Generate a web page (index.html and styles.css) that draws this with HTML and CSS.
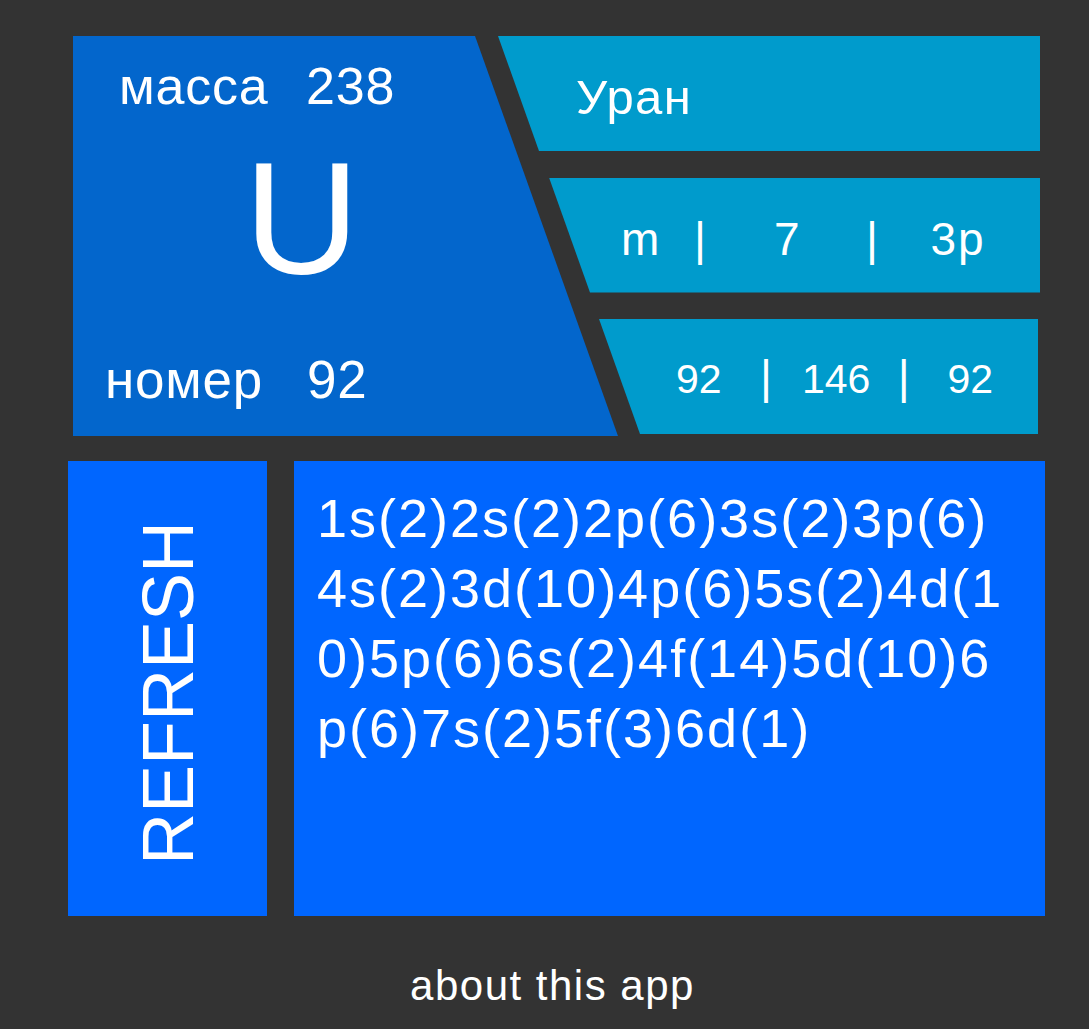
FILE: index.html
```html
<!DOCTYPE html>
<html lang="ru">
<head>
<meta charset="utf-8">
<title>Уран</title>
<link rel="stylesheet" href="styles.css">
</head>
<body>
<main class="app">
  <section class="top">
    <div class="element-card">
      <div class="card-row mass"><span class="label">масса</span><span class="value">238</span></div>
      <div class="symbol">U</div>
      <div class="card-row number"><span class="label">номер</span><span class="value">92</span></div>
    </div>
    <div class="info">
      <div class="panel panel-name"><span>Уран</span></div>
      <div class="panel panel-props">
        <span>m</span><span class="sep">|</span><span>7</span><span class="sep">|</span><span>3p</span>
      </div>
      <div class="panel panel-particles">
        <span>92</span><span class="sep">|</span><span>146</span><span class="sep">|</span><span>92</span>
      </div>
    </div>
  </section>
  <section class="bottom">
    <button class="refresh" type="button"><span class="refresh-label">REFRESH</span></button>
    <div class="config">
      <span class="line">1s(2)2s(2)2p(6)3s(2)3p(6)</span>
      <span class="line">4s(2)3d(10)4p(6)5s(2)4d(1</span>
      <span class="line">0)5p(6)6s(2)4f(14)5d(10)6</span>
      <span class="line">p(6)7s(2)5f(3)6d(1)</span>
    </div>
  </section>
  <footer class="about">about this app</footer>
</main>
</body>
</html>
```

FILE: styles.css
```css
* {
  box-sizing: border-box;
}

html,
body {
  margin: 0;
}

body {
  width: 1089px;
  height: 1029px;
  overflow: hidden;
  background: #333333;
  color: #ffffff;
  font-family: "Liberation Sans", Arial, sans-serif;
}

.app {
  padding-top: 36px;
}

/* ---------- top area ---------- */
.top {
  display: grid;
  grid-template-columns: 425px 120px 422px;
  width: 967px;
  margin-left: 73px;
  align-items: start;
}

.element-card {
  grid-column: 1 / 3;
  grid-row: 1;
  height: 400px;
  background: #0366cc;
  clip-path: polygon(0 0, 402px 0, 100% 100%, 0 100%);
  display: flex;
  flex-direction: column;
  letter-spacing: 0.05em;
}

.card-row {
  display: grid;
  line-height: 1;
  white-space: nowrap;
}

.mass {
  padding: 24px 0 0 46px;
  font-size: 52px;
  grid-template-columns: 187px auto;
}

.symbol {
  margin-top: 25.6px;
  padding-left: 171px;
  font-size: 160px;
  line-height: 1;
  letter-spacing: 0;
}

.number {
  margin-top: 55.5px;
  padding-left: 32px;
  font-size: 53px;
  grid-template-columns: 202px auto;
}

.info {
  grid-column: 2 / 4;
  grid-row: 1;
  height: 398px;
  display: flex;
  flex-direction: column;
  justify-content: space-between;
}

.panel {
  height: 115px;
  background: #009bcc;
  line-height: 1;
  white-space: nowrap;
}

.panel-name {
  clip-path: polygon(0 0, 100% 0, 100% 100%, 41px 100%);
  padding: 37px 0 0 78px;
  font-size: 49px;
  letter-spacing: 0.03em;
}

.panel-props {
  clip-path: polygon(51px 0, 100% 0, 100% 100%, 92px 100%);
  padding: 38.6px 0 0 123px;
  font-size: 46px;
  display: grid;
  grid-template-columns: 73px 80px 92px 64.5px auto;
  align-items: baseline;
  letter-spacing: 0.04em;
}

.panel-particles {
  clip-path: polygon(101px 0, 100% 0, 100% 100%, 142px 100%);
  margin-right: 2px;
  padding: 34.8px 0 0 178px;
  font-size: 41px;
  display: grid;
  grid-template-columns: 84px 42px 95.7px 49.7px auto;
  align-items: baseline;
}

.sep {
  font-size: 46px;
}

/* ---------- bottom area ---------- */
.bottom {
  display: flex;
  gap: 27px;
  height: 455px;
  margin: 25px 0 0 68px;
}

.refresh {
  width: 199px;
  padding: 9px 0 0;
  border: 0;
  background: #0066ff;
  color: #ffffff;
  font-family: inherit;
  display: flex;
  align-items: center;
  justify-content: center;
  cursor: pointer;
}

.refresh-label {
  writing-mode: vertical-rl;
  transform: rotate(180deg);
  font-size: 72px;
  line-height: 1;
}

.config {
  width: 751px;
  padding: 22px 0 0 23px;
  background: #0066ff;
  font-size: 54px;
  line-height: 70px;
  letter-spacing: 2px;
}

.line {
  display: block;
  white-space: nowrap;
}

.about {
  margin-top: 49.4px;
  padding-left: 16px;
  text-align: center;
  font-size: 42px;
  line-height: 1;
  letter-spacing: 1.5px;
}
```
